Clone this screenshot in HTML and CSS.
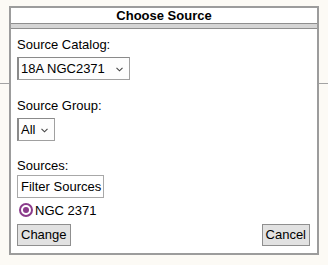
FILE: index.html
```
<!DOCTYPE html>
<html>
<head>
<meta charset="utf-8">
<link rel="stylesheet" href="styles.css">
</head>
<body>
<div class="page-rule"></div>
<div class="dialog">
  <div class="dialog-title">Choose Source</div>
  <div class="dialog-band"></div>
  <div class="dialog-body">
    <div class="label">Source Catalog:</div>
    <div class="select select-catalog"><span class="select-text">18A NGC2371</span><svg class="chev" width="7" height="5" viewBox="0 0 7 5"><path d="M0.5 0.8 L3.5 3.8 L6.5 0.8" fill="none" stroke="#444" stroke-width="1.1"/></svg></div>
    <div class="label label-group">Source Group:</div>
    <div class="select select-group"><span class="select-text">All</span><svg class="chev" width="7" height="5" viewBox="0 0 7 5"><path d="M0.5 0.8 L3.5 3.8 L6.5 0.8" fill="none" stroke="#444" stroke-width="1.1"/></svg></div>
    <div class="label label-sources">Sources:</div>
    <div class="filter">Filter Sources</div>
    <div class="radio-row"><span class="radio"><span class="radio-dot"></span></span><span class="radio-label">NGC 2371</span></div>
    <div class="buttons">
      <button class="btn" type="button">Change</button>
      <button class="btn" type="button">Cancel</button>
    </div>
  </div>
</div>
</body>
</html>
```
FILE: styles.css
```
html, body {
  margin: 0;
  padding: 0;
}
body {
  background: #fcfaf5;
  font-family: "Liberation Sans", Arial, sans-serif;
  font-size: 13px;
  color: #000;
  width: 328px;
  height: 265px;
  overflow: hidden;
}
.page-rule {
  margin-top: 83px;
  border-top: 1px solid #a3a3a3;
}
.dialog {
  position: absolute;
  left: 9px;
  top: 6px;
  width: 310px;
  box-sizing: border-box;
  border: 2px solid #9c9c9c;
  background: #fff;
}
.dialog-title {
  height: 15px;
  line-height: 15px;
  font-weight: bold;
  text-align: center;
}
.dialog-band {
  height: 4px;
  background: #d5d5d5;
  border-top: 1px solid #8e8e8e;
  border-bottom: 1px solid #8e8e8e;
}
.dialog-body {
  display: flex;
  flex-direction: column;
  align-items: flex-start;
  padding: 8px 7px 7px 6px;
}
.label {
  line-height: 15px;
  height: 15px;
}
.label-group {
  margin-top: 18px;
}
.label-sources {
  margin-top: 17px;
}
.select {
  margin-top: 5px;
  height: 23px;
  box-sizing: border-box;
  display: flex;
  align-items: center;
  border: 1px solid #a0a0a0;
  border-top-color: #8a8a8a;
  border-left: 2px solid #8a8a8a;
  background: #fdfdfd;
  padding-left: 2px;
}
.select-catalog {
  width: 113px;
}
.select-group {
  width: 38px;
}
.select-text {
  line-height: 15px;
}
.chev {
  margin-left: auto;
  margin-right: 6px;
  margin-top: 1px;
}
.filter {
  margin-top: 2px;
  width: 87px;
  height: 23px;
  box-sizing: border-box;
  border: 1px solid #a8a8a8;
  background: #fff;
  line-height: 21px;
  padding-left: 3px;
  white-space: nowrap;
}
.radio-row {
  margin-top: 3px;
  height: 18px;
  display: flex;
  align-items: center;
}
.radio {
  margin-left: 2px;
  width: 14px;
  height: 14px;
  box-sizing: border-box;
  border: 2px solid #8b3b8b;
  border-radius: 50%;
  display: flex;
  align-items: center;
  justify-content: center;
  background: #fff;
}
.radio-dot {
  width: 6px;
  height: 6px;
  border-radius: 50%;
  background: #8b3b8b;
}
.radio-label {
  margin-left: 2px;
  line-height: 15px;
}
.buttons {
  margin-top: 5px;
  align-self: stretch;
  display: flex;
  justify-content: space-between;
}
.btn {
  height: 22px;
  box-sizing: border-box;
  margin: 0;
  padding: 0 3px;
  border: 1px solid #8f8f8f;
  background: #e2e2e2;
  font-family: "Liberation Sans", Arial, sans-serif;
  font-size: 13px;
  color: #000;
  line-height: 20px;
}
```
